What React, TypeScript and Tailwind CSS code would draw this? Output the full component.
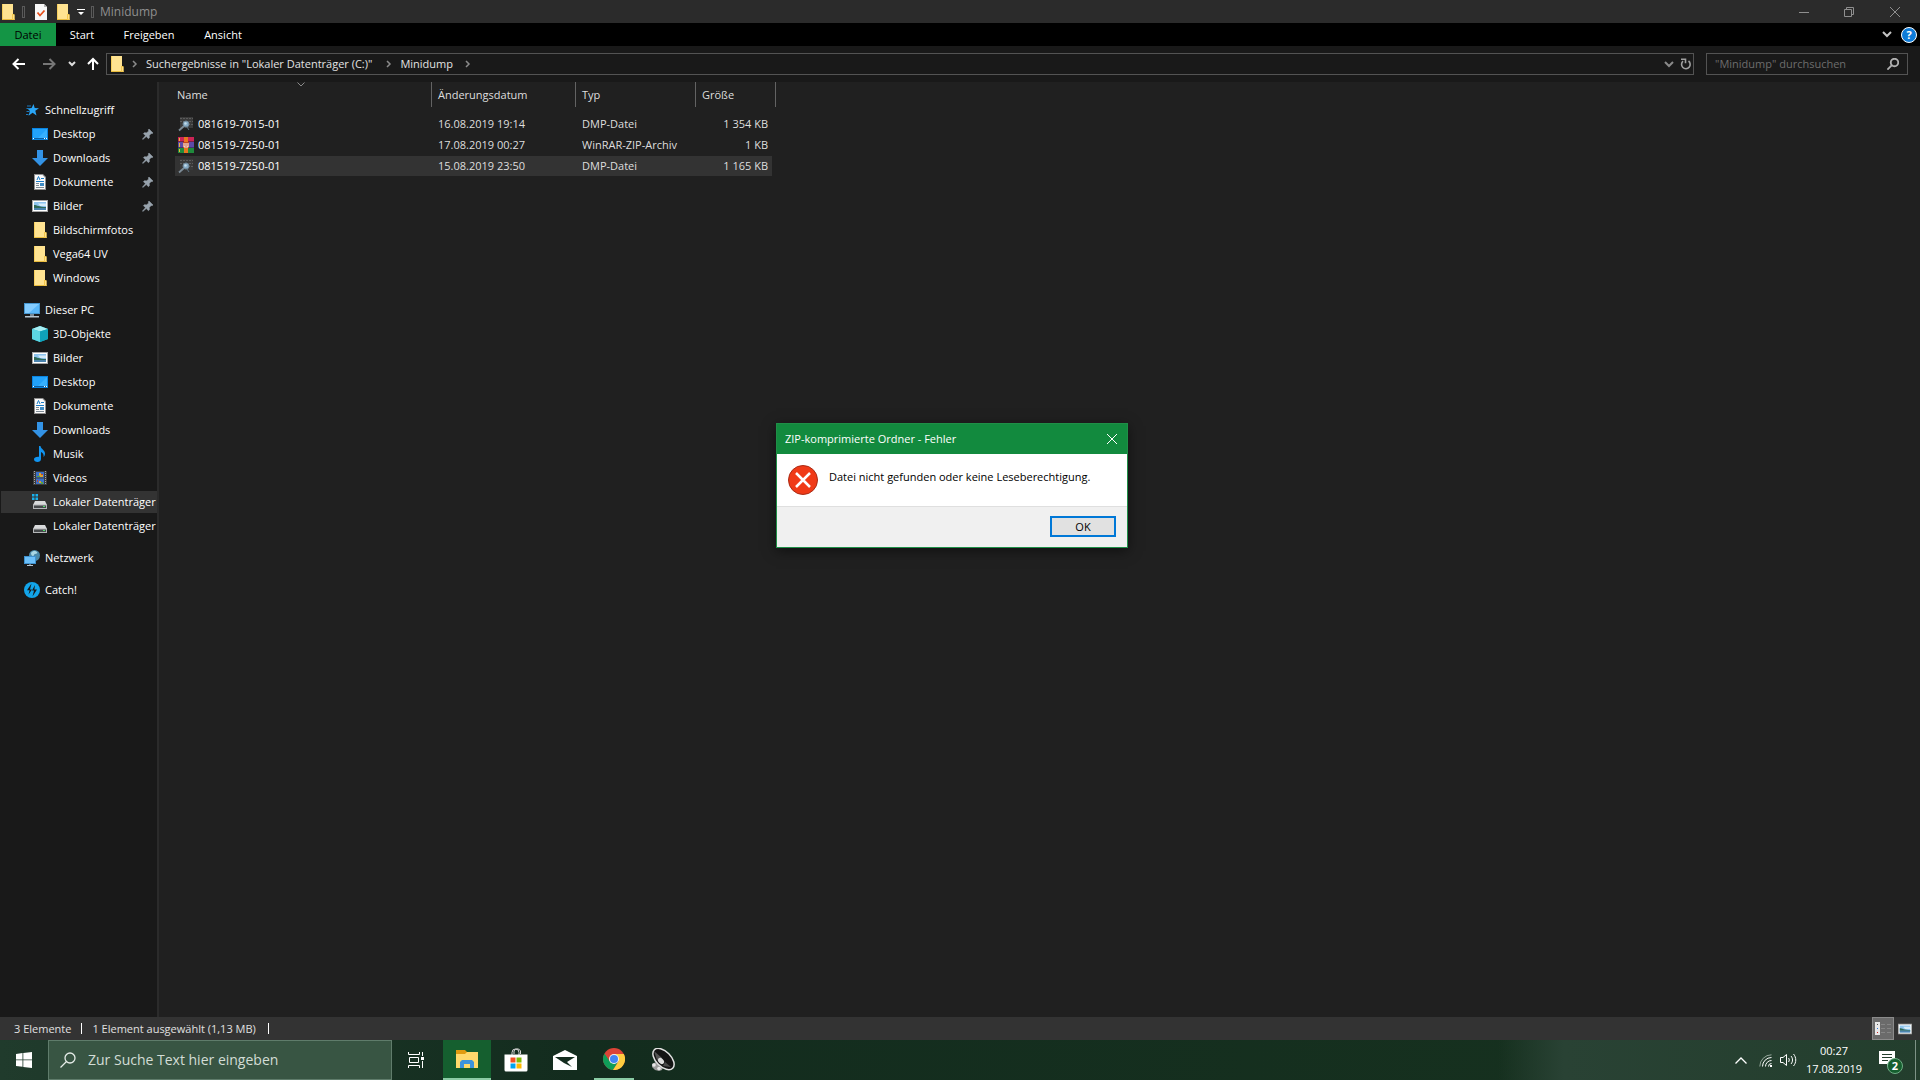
import React from 'react';

type IconProps = { className?: string };

/* ---------- Icons ---------- */

const FolderIcon: React.FC<IconProps> = ({ className = 'w-4 h-4' }) => (
  <svg viewBox="0 0 16 16" className={className} aria-hidden="true">
    <path d="M2 0h11v11h1.500v5H2z" fill="#ffe391" />
    <path d="M2 0h1v16H2z" fill="#f7cf5e" />
    <path d="M2 15h12.500v1H2z" fill="#e8bb3c" />
    <path d="M12 10h2.500v6H12z" fill="#f3c64b" />
    <path d="M13 11h1v4h-1z" fill="#ffe08a" />
  </svg>
);

const PropertiesIcon = () => (
  <svg viewBox="0 0 16 16" className="w-4 h-4" aria-hidden="true">
    <path d="M2 0h9l3 3v13H2z" fill="#f7f7f7" />
    <path d="M11 0l3 3h-3z" fill="#b5b5b5" />
    <path d="M4.500 8.500l2.500 3 4.500-5" fill="none" stroke="#e8501c" strokeWidth="1.800" />
  </svg>
);

const StarIcon = () => (
  <svg viewBox="0 0 16 16" className="w-4 h-4" aria-hidden="true">
    <path d="M9.500 2l1.200 4 4.300.2-3.700 2.600 1.200 4.700-3.900-2.700-4 3 1.300-4.900L3.500 6.400l4.100-.3z" fill="#2aa5f5" />
    <path d="M3 4h4M2.500 9.500h3M2 12.500h2.500M2.500 6.500h3" stroke="#1c79bd" strokeWidth="1" />
  </svg>
);

const DesktopIcon = () => (
  <svg viewBox="0 0 16 16" className="w-4 h-4" aria-hidden="true">
    <path d="M0 2h16v12H0z" fill="#0a84e0" />
    <path d="M1 3h14v9H1z" fill="#22a2fb" />
    <path d="M6 12l9-9v9z" fill="#36b0ff" />
    <path d="M1 12.500h14" stroke="#0b5fa5" />
    <path d="M1 12.500h1M12 12.500h1M14 12.500h1" stroke="#fff" />
  </svg>
);

const DownloadIcon = () => (
  <svg viewBox="0 0 16 16" className="w-4 h-4" aria-hidden="true">
    <path d="M5 0h6v8h5l-8 8-8-8h5z" fill="#3393e6" />
  </svg>
);

const DocumentIcon = () => (
  <svg viewBox="0 0 16 16" className="w-4 h-4" aria-hidden="true">
    <path d="M2 0h9l3 3v13H2z" fill="#8f8f8f" />
    <path d="M3 1h7.500L13 3.500V15H3z" fill="#fafafa" />
    <path d="M5 6l1.500-3.500L8 6M9 4.500h3M4 7.500h8" stroke="#1a7cc7" fill="none" />
    <path d="M4 9.500h3M4 11.500h3M4 13.500h8" stroke="#7d8a94" />
    <path d="M8 9h4v3H8z" fill="#3f8bc4" />
  </svg>
);

const PictureIcon = () => (
  <svg viewBox="0 0 16 16" className="w-4 h-4" aria-hidden="true">
    <path d="M0 2h16v12H0z" fill="#a5a5a5" />
    <path d="M1 3h14v10H1z" fill="#fff" />
    <path d="M2 4h12v8H2z" fill="#8fc4ee" />
    <path d="M6 5.500h8V8H8z" fill="#d6ebf9" />
    <path d="M2 7c3 0 5 2 12 2v1H2z" fill="#2f6a58" />
    <path d="M2 10h12v2H2z" fill="#4b83ad" />
  </svg>
);

const PinIcon = () => (
  <svg viewBox="0 0 12 12" className="w-3 h-3" aria-hidden="true">
    <path d="M7 1l4 4-1 .7-.8-.2-1.900 2 .1 2.300-1 .9L4.300 8.600.8 11.500l-.4-.4 3-3.400L1.400 5.600l1-.9 2.300.1 2-1.900L6.300 1.800z" fill="#98a3ad" stroke="#98a3ad" strokeWidth=".5" />
  </svg>
);

const ComputerIcon = () => (
  <svg viewBox="0 0 16 16" className="w-4 h-4" aria-hidden="true">
    <path d="M0 1h16v11H0z" fill="#4696cf" />
    <path d="M1 2h14v9H1z" fill="#5ab8fa" />
    <path d="M1 2h14L5 11H1z" fill="#84ccff" />
    <path d="M6 12h4v2H6z" fill="#7a8b98" />
    <path d="M1 14h14v1.500H1z" fill="#b4c5d1" />
  </svg>
);

const CubeIcon = () => (
  <svg viewBox="0 0 16 16" className="w-4 h-4" aria-hidden="true">
    <path d="M8 0l8 3v10l-8 3-8-3V3z" fill="#25b8cf" />
    <path d="M8 0l8 3-8 2.500L0 3z" fill="#a8eef3" />
    <path d="M0 3l8 2.500V16l-8-3z" fill="#5cd5e2" />
    <path d="M8 5.500L16 3v10l-8 3z" fill="#0fa2bb" />
  </svg>
);

const MusicIcon = () => (
  <svg viewBox="0 0 16 16" className="w-4 h-4" aria-hidden="true">
    <path d="M7 0h1.500c.3 3 4.500 4 4.500 7.500 0 1.500-.5 2.500-1.500 3.500.6-2.600-.8-4.200-2.500-5v7c0 2-1.500 3-3.500 3S2 15 2 13.300 3.700 10.500 7 10.700z" fill="#1194f0" />
  </svg>
);

const VideoIcon = () => (
  <svg viewBox="0 0 16 16" className="w-4 h-4" aria-hidden="true">
    <path d="M1 1h14v14H1z" fill="#3c3c3c" />
    <path d="M2.500 1v14M13.500 1v14" stroke="#a5a5a5" strokeDasharray="1 1" />
    <path d="M4 2h8v5.500H4zM4 8.500h8V14H4z" fill="#3a70c9" />
    <path d="M7 5V3h2v2h2v2H8zM5 13h2v-2h2v2z" fill="#d9a52d" />
    <path d="M9 4h2v1H9zM5 10h1v2H5z" fill="#c93f2e" />
    <path d="M5 6h3v1H5zM9 12h2v2H9z" fill="#58a33f" />
  </svg>
);

const DriveIcon: React.FC<{ system?: boolean }> = ({ system }) => (
  <svg viewBox="0 0 16 16" className="w-4 h-4" aria-hidden="true">
    <path d="M3 7h10l2 4H1z" fill="#d9dadb" />
    <path d="M1 10.500h14v4.500H1z" fill="#b4b6b8" />
    <path d="M2 11.500h12V14H2z" fill="#46494b" />
    <path d="M11 12.500h2" stroke="#4de06a" />
    {system && (
      <>
        <path d="M0 0h7v7H0z" fill="#333333" />
        <path d="M0 0h2.500v2.500H0zM3.500 0H6v2.500H3.500zM0 3.500h2.500V6H0zM3.500 3.500H6V6H3.500z" fill="#18b1ee" />
      </>
    )}
  </svg>
);

const NetworkIcon = () => (
  <svg viewBox="0 0 16 16" className="w-4 h-4" aria-hidden="true">
    <circle cx="10.500" cy="5.500" r="5.500" fill="#4b89a8" />
    <path d="M7 3c2-3 5-2 6-1s-1 2-2 2-1 2-2 2-2-1-2-3z" fill="#a9d7e4" />
    <path d="M0 6h12v8H0z" fill="#3f92cf" />
    <path d="M1 7h10v6H1z" fill="#6cc0fa" />
    <path d="M3 15.500h6M6 14v1" stroke="#b4c5d1" />
  </svg>
);

const CatchIcon = () => (
  <svg viewBox="0 0 16 16" className="w-4 h-4" aria-hidden="true">
    <circle cx="8" cy="8" r="8" fill="#12a5ea" />
    <path d="M7.500 1.500L3 8.300h2.600L4.500 12.500 8 7.500H6zM11 3L8 8.500h2L8.500 14.500 13 7.500h-2.600z" fill="#191919" />
  </svg>
);

const DumpIcon = () => (
  <svg viewBox="0 0 16 16" className="w-4 h-4" aria-hidden="true">
    <path d="M2 1h13v11H2z" fill="#3a3a3a" />
    <path d="M2 2.500h13M2 5.500h13M10 8.500h5" stroke="#5c5c5c" strokeDasharray="2 1" />
    <path d="M1 14.500l5-4.500" stroke="#7c8b96" strokeWidth="1.800" />
    <circle cx="8" cy="8" r="3" fill="#86abc6" stroke="#6f8798" />
    <path d="M9 11l2 3" stroke="#5f7482" />
    <circle cx="7.500" cy="7.500" r="1.200" fill="#c2dbea" />
  </svg>
);

const WinRarIcon = () => (
  <svg viewBox="0 0 16 16" className="w-4 h-4" aria-hidden="true">
    <path d="M0 0h16v5H0z" fill="#cc2456" />
    <path d="M0 5h16v6H0z" fill="#5c4ba8" />
    <path d="M0 11h16v5H0z" fill="#1f8a3c" />
    <path d="M0 4.500h16M0 10.500h16" stroke="#2a1c3c" strokeOpacity=".5" />
    <path d="M1.500 1v3M1.500 6v4M1.500 12v3" stroke="#e8b53c" />
    <path d="M6 0h4v16H6z" fill="#e8761f" />
    <path d="M5 5h6v6H5z" fill="#c2481f" />
    <path d="M6 6v4h4V6M8 6v3" stroke="#fff" fill="none" />
  </svg>
);

const ErrorIcon = () => (
  <svg viewBox="0 0 30 30" className="w-[30px] h-[30px]" aria-hidden="true">
    <circle cx="15" cy="15" r="14.500" fill="#f03a17" stroke="#a92c16" />
    <path d="M8 8l14 14M22 8L8 22" stroke="#fff" strokeWidth="2.500" />
  </svg>
);

const ChevronRight = () => (
  <svg viewBox="0 0 6 8" className="w-1.5 h-2" fill="none" stroke="#8a8a8a" strokeWidth="1.500" aria-hidden="true">
    <path d="M1 1l3 3-3 3" />
  </svg>
);

const ChevronDown: React.FC<{ stroke: string }> = ({ stroke }) => (
  <svg viewBox="0 0 10 7" className="w-2.5 h-[7px]" fill="none" stroke={stroke} strokeWidth="2" aria-hidden="true">
    <path d="M1 1l4 4 4-4" />
  </svg>
);

const SearchIcon: React.FC<{ className: string; width: number }> = ({ className, width }) => (
  <svg viewBox="0 0 16 16" className={className} fill="none" stroke="currentColor" strokeWidth={width} aria-hidden="true">
    <circle cx="10" cy="6" r="5" />
    <path d="M6.500 9.500L.5 15.500" />
  </svg>
);

/* ---------- Data ---------- */

interface NavItem {
  label: string;
  icon: React.ReactNode;
  top?: boolean;
  pinned?: boolean;
  selected?: boolean;
}

const navGroups: NavItem[][] = [
  [
    { label: 'Schnellzugriff', icon: <StarIcon />, top: true },
    { label: 'Desktop', icon: <DesktopIcon />, pinned: true },
    { label: 'Downloads', icon: <DownloadIcon />, pinned: true },
    { label: 'Dokumente', icon: <DocumentIcon />, pinned: true },
    { label: 'Bilder', icon: <PictureIcon />, pinned: true },
    { label: 'Bildschirmfotos', icon: <FolderIcon /> },
    { label: 'Vega64 UV', icon: <FolderIcon /> },
    { label: 'Windows', icon: <FolderIcon /> },
  ],
  [
    { label: 'Dieser PC', icon: <ComputerIcon />, top: true },
    { label: '3D-Objekte', icon: <CubeIcon /> },
    { label: 'Bilder', icon: <PictureIcon /> },
    { label: 'Desktop', icon: <DesktopIcon /> },
    { label: 'Dokumente', icon: <DocumentIcon /> },
    { label: 'Downloads', icon: <DownloadIcon /> },
    { label: 'Musik', icon: <MusicIcon /> },
    { label: 'Videos', icon: <VideoIcon /> },
    { label: 'Lokaler Datenträger', icon: <DriveIcon system />, selected: true },
    { label: 'Lokaler Datenträger', icon: <DriveIcon /> },
  ],
  [{ label: 'Netzwerk', icon: <NetworkIcon />, top: true }],
  [{ label: 'Catch!', icon: <CatchIcon />, top: true }],
];

const files = [
  { name: '081619-7015-01', date: '16.08.2019 19:14', type: 'DMP-Datei', size: '1 354 KB', icon: <DumpIcon />, selected: false },
  { name: '081519-7250-01', date: '17.08.2019 00:27', type: 'WinRAR-ZIP-Archiv', size: '1 KB', icon: <WinRarIcon />, selected: false },
  { name: '081519-7250-01', date: '15.08.2019 23:50', type: 'DMP-Datei', size: '1 165 KB', icon: <DumpIcon />, selected: true },
];

/* ---------- Window parts ---------- */

const TitleBar = () => (
  <header className="flex h-[23px] items-center bg-[#2b2b2b] text-[#8f8f8f]">
    <div className="flex flex-1 items-center">
      <FolderIcon />
      <span className="ml-1.5 h-3 w-[3px] border border-[#5a5a5a]" />
      <button className="ml-2" aria-label="Eigenschaften"><PropertiesIcon /></button>
      <button className="ml-1.5" aria-label="Neuer Ordner"><FolderIcon /></button>
      <button className="ml-1.5" aria-label="Symbolleiste anpassen">
        <svg viewBox="0 0 8 8" className="w-2 h-2" fill="#fff"><path d="M0 1h8v1H0zM1 4h6L4 7z" /></svg>
      </button>
      <span className="mr-1.5 ml-1.5 h-3 w-[3px] border border-[#5a5a5a]" />
      <h1 className="text-xs leading-4">Minidump</h1>
    </div>
    <div className="flex pr-0.5 text-[#8f8f8f]">
      <button className="flex h-[20px] w-[45px] items-center justify-center" aria-label="Minimieren">
        <svg viewBox="0 0 10 10" className="w-2.5 h-2.5" stroke="currentColor"><path d="M0 5.500h10" /></svg>
      </button>
      <button className="flex h-[20px] w-[46px] items-center justify-center" aria-label="Verkleinern">
        <svg viewBox="0 0 10 10" className="w-2.5 h-2.5" stroke="currentColor" fill="none"><path d="M.5 2.500h7v7h-7zM2.500 2.500v-2h7v7h-2" /></svg>
      </button>
      <button className="flex h-[20px] w-[46px] items-center justify-center" aria-label="Schließen">
        <svg viewBox="0 0 10 10" className="w-2.5 h-2.5" stroke="currentColor"><path d="M0 0l10 10M10 0L0 10" /></svg>
      </button>
    </div>
  </header>
);

const Ribbon = () => (
  <nav className="flex h-[23px] items-center bg-black text-white">
    <button className="h-full w-14 bg-[#149545] text-black">Datei</button>
    <button className="h-full w-[52px]">Start</button>
    <button className="h-full w-[82px]">Freigeben</button>
    <button className="h-full w-[66px]">Ansicht</button>
    <div className="ml-auto flex items-center gap-[9px] pr-[3px]">
      <button aria-label="Menüband erweitern"><ChevronDown stroke="#c4c4c4" /></button>
      <button aria-label="Hilfe" className="flex h-4 w-4 items-center justify-center rounded-full border border-white bg-[#0d7bd8] text-[11px] leading-3 font-bold">?</button>
    </div>
  </nav>
);

const AddressBar = () => (
  <div className="flex h-9 items-center bg-[#191919] pr-3 text-[#e3e3e3]">
    <div className="flex w-[106px] items-center pl-3">
      <button aria-label="Zurück">
        <svg viewBox="0 0 14 12" className="w-3.5 h-3" fill="none" stroke="#fff" strokeWidth="2"><path d="M13 6H2M6.500 1L1.500 6l5 5" /></svg>
      </button>
      <button aria-label="Vorwärts" className="ml-4">
        <svg viewBox="0 0 14 12" className="w-3.5 h-3" fill="none" stroke="#777" strokeWidth="2"><path d="M1 6h11M7.500 1l5 5-5 5" /></svg>
      </button>
      <button aria-label="Zuletzt besucht" className="ml-3">
        <svg viewBox="0 0 8 6" className="w-2 h-1.5" fill="none" stroke="#ddd" strokeWidth="2"><path d="M1 1l3 3 3-3" /></svg>
      </button>
      <button aria-label="Nach oben" className="ml-[11px]">
        <svg viewBox="0 0 12 14" className="w-3 h-3.5" fill="none" stroke="#fff" strokeWidth="2"><path d="M6 13V2M1 7l5-5 5 5" /></svg>
      </button>
    </div>
    <div className="flex h-[22px] flex-1 items-center border border-[#535353] pl-0.5">
      <FolderIcon />
      <span className="ml-[7px]"><ChevronRight /></span>
      <a href="#suche" className="ml-2 whitespace-nowrap">Suchergebnisse in "Lokaler Datenträger (C:)"</a>
      <span className="ml-3.5"><ChevronRight /></span>
      <a href="#minidump" className="ml-2">Minidump</a>
      <span className="ml-3"><ChevronRight /></span>
      <button className="ml-auto" aria-label="Vorherige Orte"><ChevronDown stroke="#8a8a8a" /></button>
      <button className="mr-px ml-1.5" aria-label="Aktualisieren">
        <svg viewBox="0 0 12 12" className="w-3 h-3" fill="none" stroke="#a0a0a0" strokeWidth="1.600">
          <path d="M3 3.200a4.300 4.300 0 1 0 5.500-.2M1 1.200h4.500v4" />
        </svg>
      </button>
    </div>
    <label className="ml-3 flex h-[22px] w-[202px] items-center border border-[#535353] px-2">
      <input type="text" aria-label="Durchsuchen" placeholder={'"Minidump" durchsuchen'} className="min-w-0 flex-1 bg-transparent outline-none placeholder:text-[#6d6d6d]" />
      <SearchIcon className="h-3 w-3 text-[#b0b0b0]" width={2.5} />
    </label>
  </div>
);

const Sidebar = () => (
  <aside className="flex w-[159px] shrink-0 flex-col gap-2 border-r-2 border-[#2b2b2b] bg-[#191919] pt-4 text-white">
    {navGroups.map((group, i) => (
      <ul key={i}>
        {group.map((item, j) => (
          <li key={j} className="py-px pl-px">
            <a
              href="#ordner"
              className={`flex h-[22px] items-center gap-[5px] ${item.top ? 'pl-[23px]' : 'pl-[31px]'} ${item.selected ? 'bg-[#333333]' : ''}`}
            >
              <span className="shrink-0">{item.icon}</span>
              <span className="flex-1 whitespace-nowrap">{item.label}</span>
              {item.pinned && <span className="mr-[3px]"><PinIcon /></span>}
            </a>
          </li>
        ))}
      </ul>
    ))}
  </aside>
);

const FileList = () => (
  <main className="flex-1 bg-[#202020] pl-4">
    <table className="table-fixed border-separate border-spacing-0 text-left text-[#dedede]">
      <thead>
        <tr className="h-[25px]">
          <th className="relative w-[257px] border-r border-[#636363] p-0 pl-0.5 font-normal">
            Name
            <svg viewBox="0 0 8 5" className="absolute top-0 left-[122px] h-[5px] w-2" fill="none" stroke="#8a8a8a" aria-hidden="true">
              <path d="M.5.5L4 4 7.500.5" />
            </svg>
          </th>
          <th className="w-36 border-r border-[#636363] p-0 pl-1.5 font-normal">Änderungsdatum</th>
          <th className="w-[120px] border-r border-[#636363] p-0 pl-1.5 font-normal">Typ</th>
          <th className="w-20 border-r border-[#636363] p-0 pl-1.5 font-normal">Größe</th>
        </tr>
      </thead>
      <tbody>
        <tr className="h-[7px]" />
        {files.map((file, i) => {
          const bg = file.selected ? 'bg-[#333333]' : '';
          return (
            <tr key={i} className="h-[21px]">
              <td className="p-0 align-top">
                <div className={`flex h-5 items-center gap-1 pl-[3px] text-white ${bg}`}>
                  {file.icon}
                  <span>{file.name}</span>
                </div>
              </td>
              <td className="p-0 align-top"><div className={`flex h-5 items-center pl-1.5 ${bg}`}>{file.date}</div></td>
              <td className="p-0 align-top"><div className={`flex h-5 items-center pl-1.5 ${bg}`}>{file.type}</div></td>
              <td className="p-0 align-top"><div className={`mr-1 flex h-5 items-center justify-end pr-1 ${bg}`}>{file.size}</div></td>
            </tr>
          );
        })}
      </tbody>
    </table>
  </main>
);

const StatusBar = () => (
  <footer className="flex h-[23px] items-center bg-[#333333] pl-3.5 text-[#e0e0e0]">
    <span>3 Elemente</span>
    <span className="mx-2.5 h-[11px] w-px bg-white" />
    <span>1 Element ausgewählt (1,13 MB)</span>
    <span className="ml-3 h-[11px] w-px bg-white" />
    <button className="ml-auto flex h-[23px] w-[22px] items-center justify-center border border-[#8b8b8b] bg-[#6b6b6b]" aria-label="Details">
      <svg viewBox="0 0 16 13" className="h-[13px] w-4" aria-hidden="true">
        <path d="M0 0h5v13H0z" fill="#e8e8e8" />
        <path d="M2 2.500h1" stroke="#555" />
        <path d="M2 6.500h1" stroke="#2a78e0" />
        <path d="M2 10.500h1" stroke="#d02020" />
        <path d="M6 2.500h4M12 2.500h4M6 6.500h4M12 6.500h4M6 10.500h4M12 10.500h4" stroke="#858585" />
      </svg>
    </button>
    <button className="mr-2 ml-1 flex w-3.5 items-center" aria-label="Große Symbole"><PictureIcon /></button>
  </footer>
);

const TaskButton: React.FC<{ label: string; state?: 'active' | 'open'; children: React.ReactNode }> = ({ label, state, children }) => (
  <button aria-label={label} className={`flex h-full w-12 flex-col items-center ${state === 'active' ? 'bg-[#155f2f]' : ''}`}>
    <span className="flex flex-1 items-center">{children}</span>
    {state === 'active' && <span className="h-0.5 w-full bg-[#8bcca5]" />}
    {state === 'open' && <span className="h-0.5 w-10 bg-[#8bcca5]" />}
  </button>
);

const Taskbar = () => (
  <footer className="flex h-10 items-center bg-linear-to-r from-[#203b2c] via-[#132c1e] via-30% to-[#17321f] text-white">
    <button className="flex h-full w-12 items-center justify-center" aria-label="Start">
      <svg viewBox="0 0 16 16" className="w-4 h-4" fill="#fff">
        <path d="M0 2l6.500-.9v6.400H0zM7.300 1L16 0v7.500H7.300zM0 8.300h6.500v6.400L0 14zM7.300 8.300H16V16l-8.700-1.100z" />
      </svg>
    </button>
    <label className="flex h-full w-[344px] items-center border border-[#5f7c6b] bg-[#385543] pl-[11px]">
      <SearchIcon className="h-4 w-4 text-[#e6ece8]" width={1.3} />
      <input type="text" aria-label="Suche" placeholder="Zur Suche Text hier eingeben" className="ml-3 min-w-0 flex-1 bg-transparent text-sm outline-none placeholder:text-[#d3ddd6]" />
    </label>
    <div className="flex h-full gap-px">
      <TaskButton label="Aktive Anwendungen">
        <svg viewBox="0 0 16 16" className="w-4 h-4" fill="none" stroke="#fff">
          <path d="M.5 0v2.500h11V0M.5 16v-2.500h11V16M1.500 5.500h9v5h-9zM14.500 0v4M14.500 9v7" />
          <path d="M13 5h3v3h-3z" fill="#fff" stroke="none" />
        </svg>
      </TaskButton>
      <div className="w-px" />
      <TaskButton label="Explorer" state="active">
        <svg viewBox="0 0 22 18" className="h-[18px] w-[22px]">
          <path d="M0 0h9l2 2h11v4H0z" fill="#e09b10" />
          <path d="M0 4h9l2-2h11v16H0z" fill="#ffd96c" />
          <path d="M4 18v-6l2-2h10l2 2v6h-4v-4H8v4z" fill="#3d93dc" />
        </svg>
      </TaskButton>
      <TaskButton label="Microsoft Store">
        <svg viewBox="0 0 24 24" className="w-6 h-6">
          <path d="M8 7V4.500a3.500 3.500 0 0 1 7 0V7M10 6V3a3.500 3.500 0 0 1 6.500 0v3" fill="none" stroke="#d6d6d6" />
          <path d="M.5 6.500h23V22a1.500 1.500 0 0 1-1.500 1.500H2A1.500 1.500 0 0 1 .5 22z" fill="#fff" />
          <path d="M6.500 9.500h5v5h-5z" fill="#f25022" />
          <path d="M12.500 9.500h5v5h-5z" fill="#7fba00" />
          <path d="M6.500 15.500h5v5h-5z" fill="#00a4ef" />
          <path d="M12.500 15.500h5v5h-5z" fill="#ffb900" />
        </svg>
      </TaskButton>
      <TaskButton label="Mail">
        <svg viewBox="0 0 24 20" className="h-5 w-6">
          <path d="M0 6l12-6 12 6v14H0z" fill="#fff" />
          <path d="M2 7h20l-8 5 5 5-8-4z" fill="#132c1e" />
        </svg>
      </TaskButton>
      <TaskButton label="Google Chrome" state="open">
        <svg viewBox="0 0 22 22" className="h-[22px] w-[22px]">
          <circle cx="11" cy="11" r="11" fill="#db4437" />
          <path d="M1.500 5.500A11 11 0 0 0 10 22l5.500-9h-9z" fill="#0f9d58" />
          <path d="M11 6h9.800A11 11 0 0 1 10 22l5.500-8.500z" fill="#ffcd40" />
          <circle cx="11" cy="11" r="5" fill="#f1f1f1" />
          <circle cx="11" cy="11" r="4" fill="#4285f4" />
        </svg>
      </TaskButton>
      <TaskButton label="Lautsprecher">
        <svg viewBox="0 0 24 24" className="w-6 h-6">
          <path d="M1 16l4-2 7 5-1 3-3 1-4-1-3-3z" fill="#9c9c9c" />
          <circle cx="3" cy="17" r="1.800" fill="#e8e8e8" />
          <circle cx="8" cy="20.500" r="1.800" fill="#e8e8e8" />
          <ellipse cx="12.500" cy="11" rx="7.500" ry="13" transform="rotate(-45 12.500 11)" fill="#141414" stroke="#e2e2e2" strokeWidth="1.500" />
          <path d="M3 3l8 7-5 2z" fill="#555" />
          <path d="M14 14l6 5-8-1z" fill="#4a4a4a" />
          <ellipse cx="10" cy="13" rx="2.500" ry="3.500" transform="rotate(-45 10 13)" fill="#dcdcdc" />
        </svg>
      </TaskButton>
    </div>
    <div className="flex-1" />
    <div className="flex h-full items-center bg-linear-to-r from-transparent from-3% via-[#294234] via-18% to-[#233e2d] pl-[250px]">
      <button aria-label="Ausgeblendete Symbole">
        <svg viewBox="0 0 12 7" className="h-[7px] w-3" fill="none" stroke="#fff" strokeWidth="1.300"><path d="M.5 6.500L6 1l5.500 5.500" /></svg>
      </button>
      <button aria-label="Netzwerk" className="ml-3">
        <svg viewBox="0 0 13 13" className="h-[13px] w-[13px]" fill="none" stroke="#fff">
          <path d="M.8 12.500A11.700 11.700 0 0 1 12.500.8" stroke="#95a69b" />
          <path d="M3.500 12.500a9 9 0 0 1 9-9M6.500 12.500a6 6 0 0 1 6-6M9.500 12.500a3 3 0 0 1 3-3" />
          <path d="M11 11h2v2h-2z" fill="#fff" stroke="none" />
        </svg>
      </button>
      <button aria-label="Lautstärke" className="ml-2">
        <svg viewBox="0 0 17 14" className="h-3.5 w-[17px]" fill="none" stroke="#fff">
          <path d="M.5 4.500H3l3.500-3v11L3 9.500H.5zM8.500 5c1 1.200 1 2.800 0 4M11 3c2 2.300 2 5.700 0 8M13.500 1c3 3.500 3 8.500 0 12" />
        </svg>
      </button>
      <div className="ml-2 w-[58px] text-center leading-[18px] whitespace-nowrap">
        <div>00:27</div>
        <div>17.08.2019</div>
      </div>
      <button className="relative ml-4 h-6 w-6" aria-label="2 neue Benachrichtigungen">
        <svg viewBox="0 0 24 24" className="w-6 h-6">
          <path d="M0 3h16v13h-5l-3 3v-3H0z" fill="#fff" />
          <path d="M3 6.500h10M3 9.500h10M3 12.500h6" stroke="#233e2d" />
        </svg>
        <span className="absolute top-2.5 left-2 flex h-4 w-4 items-center justify-center rounded-full border border-[#6fae86] bg-[#155f2f] text-[11px] leading-3 font-bold">2</span>
      </button>
      <span className="mr-1 ml-3 h-full w-px bg-[#7d9386]" />
    </div>
  </footer>
);

const ErrorDialog = () => (
  <section
    role="alertdialog"
    aria-labelledby="dialog-title"
    className="absolute top-[423px] left-[776px] w-[352px] border border-[#1f8f47] bg-white text-black shadow-[0_3px_12px_rgba(0,0,0,0.5)]"
  >
    <div className="flex h-[30px] items-center justify-between bg-[#128a3e] pr-2.5 pl-2 text-white">
      <h2 id="dialog-title">ZIP-komprimierte Ordner - Fehler</h2>
      <button aria-label="Schließen">
        <svg viewBox="0 0 10 10" className="w-2.5 h-2.5" stroke="#fff"><path d="M0 0l10 10M10 0L0 10" /></svg>
      </button>
    </div>
    <div className="flex h-[52px] gap-[11px] pt-[11px] pl-[11px]">
      <ErrorIcon />
      <p className="pt-1">Datei nicht gefunden oder keine Leseberechtigung.</p>
    </div>
    <div className="flex h-[41px] items-start justify-end border-t border-[#dfdfdf] bg-[#f0f0f0] pt-[9px] pr-[11px]">
      <button className="h-[21px] w-[66px] border-2 border-[#0078d7] bg-[#e1e1e1] leading-4">OK</button>
    </div>
  </section>
);

const App = () => (
  <div className="relative flex min-h-screen flex-col bg-[#202020] font-['Open_Sans','Noto_Sans',sans-serif] text-[11px] leading-4">
    <TitleBar />
    <Ribbon />
    <AddressBar />
    <div className="flex flex-1">
      <Sidebar />
      <FileList />
    </div>
    <StatusBar />
    <Taskbar />
    <ErrorDialog />
  </div>
);

export default App;
